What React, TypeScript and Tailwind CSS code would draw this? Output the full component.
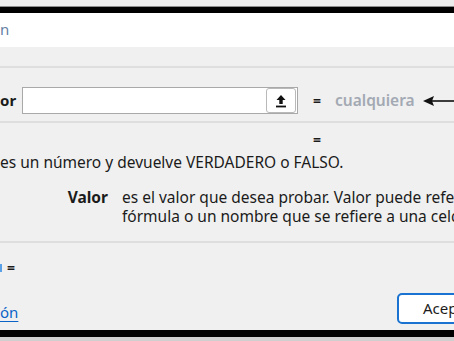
import React from "react";

const font = { fontFamily: '"Noto Sans", "Open Sans", Arial, sans-serif' };

function UploadIcon() {
  return (
    <svg width="12" height="14" viewBox="0 0 12 14" fill="none">
      <path d="M6 1 L1.5 6 H4.3 V10 H7.7 V6 H10.5 Z" fill="#111" />
      <rect x="1" y="11.6" width="10" height="1.8" fill="#111" />
    </svg>
  );
}

function LeftArrow() {
  return (
    <svg width="34" height="12" viewBox="0 0 34 12">
      <path d="M0 6 L11 1 L9 6 L11 11 Z" fill="#111" />
      <rect x="8" y="5.2" width="26" height="1.6" fill="#111" />
    </svg>
  );
}

export default function App() {
  return (
    <div
      className="w-[454px] h-[341px] overflow-hidden flex flex-col bg-[#ebebeb] text-[#1b1b1b]"
      style={font}
    >
      {/* outer frame */}
      <div className="h-[6px] shrink-0 bg-[#ececec]" />
      <div className="h-[1px] shrink-0 bg-[#8c8c8c]" />
      <div className="h-[6px] shrink-0 bg-black" />

      {/* title bar */}
      <div className="h-[34px] shrink-0 bg-white flex items-center">
        <span className="text-[15px] leading-none text-[#6581a3] -mt-[1px]">n</span>
      </div>

      {/* body */}
      <div className="flex-1 bg-[#f0f0f0] flex flex-col">
        <div className="h-[19px] shrink-0" />
        <div className="h-[2px] shrink-0 bg-[#dedede]" />

        {/* argument row */}
        <div className="h-[53px] shrink-0 pt-[19px] flex items-start">
          <span className="w-[22px] h-[27px] shrink-0 flex items-center text-[15px] font-bold leading-none">
            or
          </span>
          <div className="w-[276px] h-[27px] shrink-0 bg-white border border-[#a9a9a9] flex justify-end items-center pr-[1px]">
            <div className="w-[30px] h-[25px] border border-[#b9b9b9] rounded-[3px] bg-white flex items-center justify-center">
              <UploadIcon />
            </div>
          </div>
          <div className="h-[27px] flex items-center">
            <span className="ml-[15px] text-[14px] font-bold leading-none">=</span>
            <span className="ml-[14px] text-[15.5px] font-semibold leading-none text-[#a3a9b3]">
              cualquiera
            </span>
            <span className="ml-[8px] flex items-center">
              <LeftArrow />
            </span>
          </div>
        </div>

        <div className="h-[2px] shrink-0 bg-[#dedede]" />

        <div className="h-[30px] shrink-0 pt-[8px] pl-[313px]">
          <span className="block text-[14px] font-bold leading-[18px]">=</span>
        </div>
        <div className="h-[18px] shrink-0 whitespace-nowrap">
          <span className="block text-[15.5px] leading-[18px]">
            es un número y devuelve VERDADERO o FALSO.
          </span>
        </div>

        {/* argument help */}
        <div className="mt-[17px] flex whitespace-nowrap">
          <span className="w-[108px] shrink-0 text-right text-[15.5px] font-bold leading-[19px]">
            Valor
          </span>
          <div className="ml-[14px] text-[15.5px] leading-[19px]">
            <div>es el valor que desea probar. Valor puede referirse a</div>
            <div>fórmula o un nombre que se refiere a una celda</div>
          </div>
        </div>

        <div className="mt-[15px] h-[2px] shrink-0 bg-[#dedede]" />

        <div className="h-[50px] shrink-0 flex items-center">
          <span className="w-[2px] h-[8px] bg-[#5aa0e6]" />
          <span className="ml-[5px] text-[14px] font-bold leading-none">=</span>
        </div>

        {/* footer */}
        <div className="h-[37px] shrink-0 flex items-start justify-between">
          <span className="mt-[10px] text-[15px] leading-[18px] text-[#0a64c8] underline underline-offset-[3px]">
            ón
          </span>
          <div className="w-[90px] -mr-[33px] h-[31px] border-2 border-[#1a73d0] rounded-[5px] bg-white flex items-center pl-[24px]">
            <span className="text-[15px] leading-none">Aceptar</span>
          </div>
        </div>
      </div>

      <div className="h-[7px] shrink-0 bg-black" />
      <div className="h-[4px] shrink-0 bg-[#cfcfcf]" />
    </div>
  );
}
